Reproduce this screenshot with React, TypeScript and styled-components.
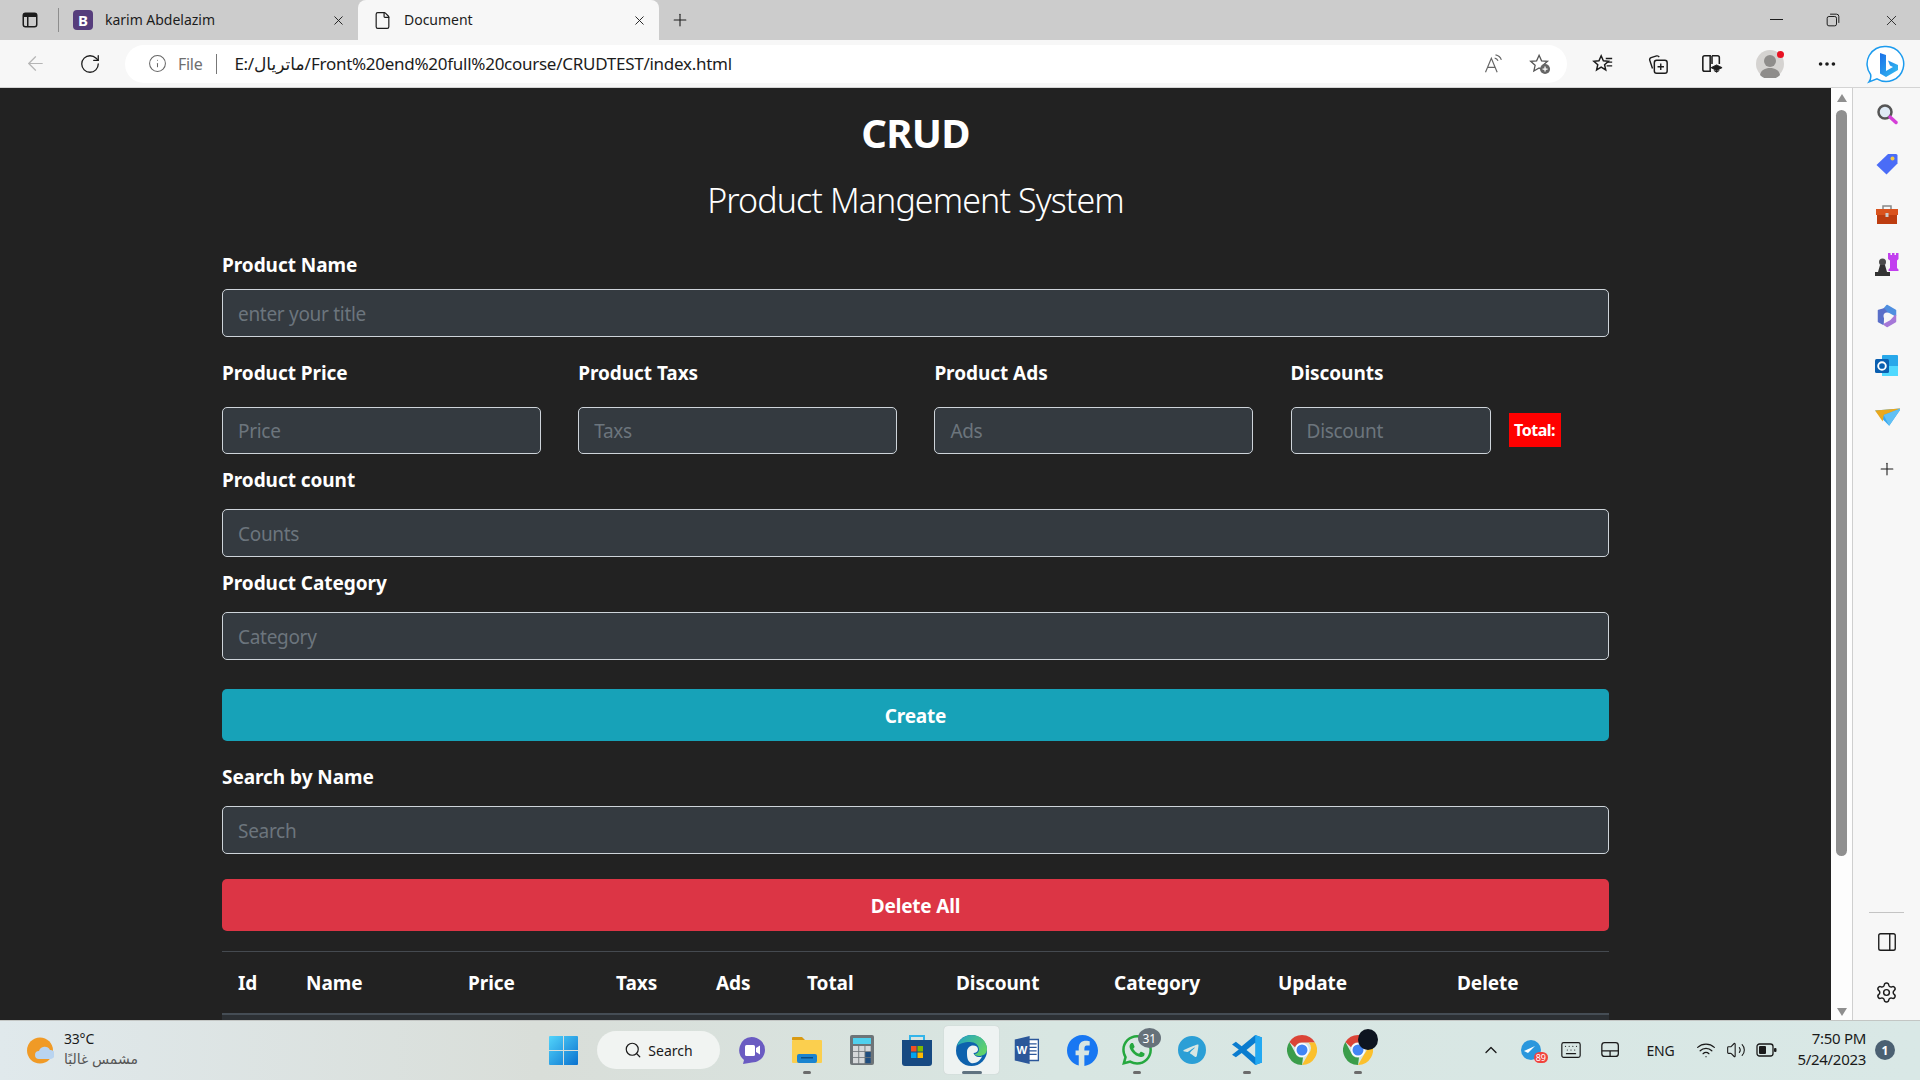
import React from 'react';
import styled, { createGlobalStyle } from 'styled-components';
import {
  ArrowLeft, ChevronUp, File, Info, Keyboard, MoreHorizontal, PanelRight, Plus, RotateCw,
  Search, Settings, Volume2, Wifi, X,
} from 'lucide-react';
import { SiFacebook, SiWhatsapp, SiTelegram } from 'react-icons/si';

const UI = `"Noto Sans", "Open Sans", "DejaVu Sans", sans-serif`;

const Global = createGlobalStyle`
  html, body { margin: 0; padding: 0; height: 100%; overflow: hidden; background: #222; }
  * { box-sizing: border-box; }
`;

const Window = styled.div`
  width: 1920px;
  height: 1080px;
  display: flex;
  flex-direction: column;
  font-family: ${UI};
  overflow: hidden;
`;

/* browser chrome */
const TabStrip = styled.div`
  height: 40px;
  background: #ccc;
  display: flex;
  align-items: center;
  color: #1c1c1c;
`;
const SideToggle = styled.div`
  width: 59px;
  height: 24px;
  padding-left: 21px;
  display: flex;
  align-items: center;
  border-right: 1px solid #8d8d8d;
`;
const Tab = styled.div<{ $active?: boolean; $width: number; $pad: number }>`
  width: ${p => p.$width}px;
  height: 40px;
  padding: 0 12px 0 ${p => p.$pad}px;
  display: flex;
  align-items: center;
  gap: 12px;
  font-size: 14px;
  letter-spacing: -0.02px;
  background: ${p => (p.$active ? '#f7f7f7' : 'transparent')};
  border-radius: 8px 8px 0 0;
`;
const TabTitle = styled.span`
  flex: 1;
  white-space: nowrap;
  margin-top: -2px;
`;
const Favicon = styled.span`
  width: 20px;
  height: 20px;
  border-radius: 4px;
  background: #563d7c;
  color: #fff;
  font-size: 15px;
  font-weight: 700;
  display: flex;
  align-items: center;
  justify-content: center;
`;
const NewTab = styled.div`
  margin-left: 11px;
  display: flex;
`;
const WindowControls = styled.div`
  margin-left: auto;
  display: flex;
  align-items: center;
  gap: 43px;
  padding-right: 20px;
`;
const Toolbar = styled.div`
  height: 48px;
  background: #f7f7f7;
  border-bottom: 1px solid #d4d4d4;
  display: flex;
  align-items: center;
  padding-left: 10px;
`;
const ToolSlot = styled.div<{ $w: number; $color?: string }>`
  width: ${p => p.$w}px;
  height: 32px;
  flex: none;
  display: flex;
  align-items: center;
  justify-content: center;
  color: ${p => p.$color ?? '#1c1c1c'};
`;
const AddressPill = styled.div`
  width: 1442px;
  height: 38px;
  flex: none;
  margin: 0 8px 0 5px;
  border-radius: 19px;
  background: #fff;
  display: flex;
  align-items: center;
  padding-left: 23px;
  color: #1c1c1c;
  font-size: 17px;
`;
const FileLabel = styled.span`
  color: #6f6f6f;
  margin-left: 11px;
  font-size: 16px;
  letter-spacing: -0.3px;
`;
const AddressDivider = styled.span`
  width: 1px;
  height: 20px;
  background: #777;
  margin: 0 17px 0 14px;
`;
const Url = styled.span`
  white-space: nowrap;
  letter-spacing: -0.27px;
`;
const PillActions = styled.div`
  margin-left: auto;
  display: flex;
  align-items: center;
  gap: 26px;
  padding-right: 16px;
  color: #666;
`;
const ProfileDot = styled.span`
  position: absolute;
  top: 1px;
  right: 0;
  width: 7px;
  height: 7px;
  border-radius: 50%;
  background: #e81123;
`;
const Profile = styled.div`
  position: relative;
  width: 28px;
  height: 28px;
`;

/* middle */
const Middle = styled.div`
  flex: 1;
  min-height: 0;
  display: flex;
`;
const Page = styled.main`
  width: 1831px;
  flex: none;
  background: #222;
  overflow: hidden;
`;
const Container = styled.div`
  width: 1387px;
  margin: 0 auto;
  color: #fff;
  font-family: ${UI};
`;
const Title = styled.h1`
  margin: 21px 0 0;
  font-size: 40px;
  line-height: 48px;
  font-weight: 700;
  text-align: center;
  letter-spacing: -0.7px;
`;
const Subtitle = styled.h2`
  margin: 19px 0 0;
  font-size: 34px;
  line-height: 48px;
  font-weight: 300;
  text-align: center;
  letter-spacing: -0.9px;
`;
const FieldLabel = styled.label<{ $top: number; $bottom: number }>`
  display: block;
  margin: ${p => p.$top}px 0 ${p => p.$bottom}px;
  font-size: 19px;
  line-height: 24px;
  font-weight: 700;
  letter-spacing: -0.05px;
`;
const TextInput = styled.input<{ $short?: boolean }>`
  display: block;
  width: 100%;
  height: ${p => (p.$short ? 47 : 48)}px;
  padding: 1px 15px 0;
  background: #343a40;
  border: 1px solid #ced4da;
  border-radius: 5px;
  color: #fff;
  font-family: ${UI};
  font-size: 19px;
  letter-spacing: -0.3px;
  outline: none;
  &::placeholder { color: #6c757d; opacity: 1; }
`;
const PriceRow = styled.div`
  display: grid;
  grid-template-columns: 319px 319px 319px 1fr;
  column-gap: 37.2px;
`;
const DiscountCell = styled.div`
  display: flex;
  align-items: center;
  gap: 18px;
`;
const DiscountInput = styled(TextInput)`
  width: 200px;
  flex: none;
`;
const TotalBadge = styled.small`
  height: 34px;
  width: 52px;
  margin-top: -1px;
  background: #f00;
  color: #fff;
  font-size: 16px;
  font-weight: 700;
  letter-spacing: -0.5px;
  display: flex;
  align-items: center;
  justify-content: center;
`;
const ActionButton = styled.button<{ $tone: string; $top: number }>`
  display: block;
  width: 100%;
  height: 52px;
  margin-top: ${p => p.$top}px;
  padding-top: 2px;
  border: none;
  border-radius: 5px;
  background: ${p => p.$tone};
  color: #fff;
  font-family: ${UI};
  font-size: 19px;
  font-weight: 700;
  letter-spacing: -0.2px;
`;
const Table = styled.table`
  width: 1387px;
  margin-top: 20px;
  border-collapse: collapse;
  table-layout: fixed;
  border-top: 1px solid #454a50;
`;
const HeadCell = styled.th<{ $w: number }>`
  width: ${p => p.$w}px;
  height: 62px;
  padding: 1px 0 0 16px;
  text-align: left;
  font-size: 19px;
  font-weight: 700;
  letter-spacing: -0.05px;
  border-bottom: 2px solid #454d55;
`;
const StripeRow = styled.td`
  height: 50px;
  background: #2c3034;
`;

/* scrollbar and sidebar */
const ScrollTrack = styled.div`
  width: 22px;
  flex: none;
  background: #fdfdfd;
  border-right: 1px solid #cfcfcf;
  display: flex;
  flex-direction: column;
  align-items: center;
  padding: 6px 0 4px;
`;
const ScrollThumb = styled.div`
  width: 11px;
  height: 746px;
  margin: 8px 0 auto;
  border-radius: 6px;
  background: #8f8f8f;
`;
const Arrow = styled.div<{ $down?: boolean }>`
  width: 0;
  height: 0;
  border-left: 5.5px solid transparent;
  border-right: 5.5px solid transparent;
  ${p => (p.$down ? 'border-top: 8px solid #8f8f8f;' : 'border-bottom: 8px solid #8f8f8f;')}
`;
const Sidebar = styled.aside`
  flex: 1;
  background: #f7f7f7;
  display: flex;
  flex-direction: column;
  align-items: center;
  padding: 13px 0 15px;
  color: #1c1c1c;
`;
const SideIcon = styled.div<{ $top?: number }>`
  width: 26px;
  height: 26px;
  margin-top: ${p => p.$top ?? 0}px;
  margin-bottom: 24.4px;
  display: flex;
  align-items: center;
  justify-content: center;
`;
const SideRule = styled.div`
  width: 35px;
  height: 1px;
  background: #c4c4c4;
  margin: auto 0 16px;
`;
const SideBottom = styled.div`
  height: 26px;
  margin-bottom: 24px;
  display: flex;
  align-items: center;
  &:last-child { margin-bottom: 0; }
`;

/* taskbar */
const Taskbar = styled.footer`
  height: 60px;
  flex: none;
  padding-bottom: 1px;
  border-top: 1px solid #c3c6c4;
  background: linear-gradient(90deg, #e0e9ec 0%, #d9ded9 28%, #d8e6e2 55%, #d9e8e6 100%);
  display: flex;
  align-items: center;
  color: #1a1a1a;
`;
const Weather = styled.div`
  width: 549px;
  flex: none;
  padding-left: 27px;
  display: flex;
  align-items: center;
  gap: 10px;
`;
const WeatherText = styled.div`
  font-size: 14px;
  line-height: 20px;
  margin-top: -2px;
  letter-spacing: -0.2px;
  white-space: nowrap;
`;
const WeatherNote = styled.div`
  color: #555;
`;
const TaskIcons = styled.div`
  display: flex;
  align-items: center;
  height: 48px;
`;
const TaskSlot = styled.div<{ $active?: boolean; $w?: number; $dot?: boolean }>`
  position: relative;
  width: ${p => p.$w ?? 55.1}px;
  height: 48px;
  flex: none;
  display: flex;
  align-items: center;
  justify-content: center;
  border-radius: 4px;
  ${p => p.$active && 'background: #eef3f2; box-shadow: 0 0 1px #bbb;'}
  &::after {
    content: '';
    display: ${p => (p.$dot || p.$active ? 'block' : 'none')};
    position: absolute;
    bottom: 0;
    left: 50%;
    transform: translateX(-50%);
    width: ${p => (p.$active ? 20 : 8)}px;
    height: 3px;
    border-radius: 2px;
    background: ${p => (p.$active ? '#5f7280' : '#6b6b6b')};
  }
`;
const SearchPill = styled.div`
  width: 123px;
  height: 38px;
  margin: 0 4px 0 19px;
  border-radius: 19px;
  background: #f1f4f2;
  display: flex;
  align-items: center;
  justify-content: center;
  gap: 6px;
  font-size: 14px;
  flex: none;
`;
const CountBadge = styled.span`
  position: absolute;
  top: 2px;
  right: 4px;
  width: 23px;
  height: 20px;
  border-radius: 50%;
  background: #66717a;
  color: #fff;
  font-size: 12px;
  display: flex;
  align-items: center;
  justify-content: center;
`;
const BlackBlob = styled.span`
  position: absolute;
  top: 3px;
  right: 7px;
  width: 20px;
  height: 21px;
  border-radius: 50%;
  background: #0d1420;
`;
const Tray = styled.div`
  margin-left: auto;
  display: flex;
  align-items: center;
  padding-right: 25px;
`;
const TraySlot = styled.div<{ $w: number }>`
  position: relative;
  width: ${p => p.$w}px;
  display: flex;
  align-items: center;
  justify-content: center;
  flex: none;
`;
const TrayBadge = styled.span`
  position: absolute;
  right: 3px;
  bottom: -3px;
  padding: 0 2px;
  border-radius: 6px;
  background: #f0443e;
  color: #fff;
  font-size: 9px;
  line-height: 11px;
`;
const Lang = styled(TraySlot)`
  font-size: 14px;
  letter-spacing: -0.2px;
`;
const Clock = styled.div`
  width: 85px;
  text-align: right;
  font-size: 15px;
  line-height: 21px;
  margin-top: -2px;
  letter-spacing: -0.3px;
`;
const NotifyBadge = styled.span`
  width: 20px;
  height: 20px;
  margin-left: 9px;
  border-radius: 50%;
  background: #4b6072;
  color: #fff;
  font-size: 12px;
  font-weight: 700;
  display: flex;
  align-items: center;
  justify-content: center;
`;

/* drawn icons */
const Glyph = ({ size = 24, children }: { size?: number; children: React.ReactNode }) => (
  <svg width={size} height={size} viewBox="0 0 24 24" fill="none">{children}</svg>
);

const TabsIcon = () => (
  <Glyph size={18}>
    <rect x="3" y="3" width="18" height="18" rx="3" stroke="#1c1c1c" strokeWidth="2" />
    <path d="M3 8h18v-2a3 3 0 0 0-3-3H6a3 3 0 0 0-3 3z" fill="#1c1c1c" />
    <path d="M9 8v13" stroke="#1c1c1c" strokeWidth="2" />
  </Glyph>
);
const RestoreIcon = () => (
  <Glyph size={14}>
    <rect x="2" y="6" width="16" height="16" rx="3" stroke="#1c1c1c" strokeWidth="1.7" />
    <path d="M7 2h11a4 4 0 0 1 4 4v11" stroke="#1c1c1c" strokeWidth="1.7" />
  </Glyph>
);
const ReadAloudIcon = () => (
  <Glyph size={20}>
    <path d="M3 22 10 5l7 17M5.500 16h9" stroke="#666" strokeWidth="1.400" />
    <path d="M14 5a5 5 0 0 1 4 3M15 1a9 9 0 0 1 7 6" stroke="#666" strokeWidth="1.400" />
  </Glyph>
);
const FavAddIcon = () => (
  <Glyph size={22}>
    <path d="M11 2.500l2.700 6 6.500.6-4.900 4.300 1.400 6.300-5.700-3.300-5.700 3.300 1.400-6.300L1.800 9.100l6.500-.6z" stroke="#555" strokeWidth="1.400" />
    <circle cx="17.500" cy="17.500" r="5.500" fill="#666" />
    <path d="M17.500 14.800v5.400M14.800 17.500h5.400" stroke="#fff" strokeWidth="1.400" />
  </Glyph>
);
const FavoritesIcon = () => (
  <Glyph size={22}>
    <path d="M10 3l2.400 5.400 5.600.6-4.300 3.800 1.300 5.700-5-3-5 3 1.300-5.700L2 9l5.600-.6z" stroke="#1c1c1c" strokeWidth="1.600" />
    <path d="M15 6h7M17 10h5M16 14h6" stroke="#1c1c1c" strokeWidth="1.500" />
  </Glyph>
);
const CollectionsIcon = () => (
  <Glyph size={22}>
    <path d="M6 17 3 8c-.4-1.300.3-2.500 1.500-3l6-1.800c1.200-.3 2.300.3 2.800 1.300" stroke="#1c1c1c" strokeWidth="1.500" />
    <rect x="8" y="8" width="14" height="14" rx="2.500" stroke="#1c1c1c" strokeWidth="1.600" fill="#f7f7f7" />
    <path d="M15 11.500v7M11.500 15h7" stroke="#1c1c1c" strokeWidth="1.500" />
  </Glyph>
);
const LearnIcon = () => (
  <Glyph size={22}>
    <path d="M10 20H4a2 2 0 0 1-2-2V5a2 2 0 0 1 2-2h6zM12 3h6a2 2 0 0 1 2 2v7M12 3v9" stroke="#1c1c1c" strokeWidth="1.700" />
    <path d="M11 16l6-3 6 3-6 3zM14 19l3 2 3-2" fill="#1c1c1c" stroke="#1c1c1c" strokeWidth="1" />
  </Glyph>
);
const ProfileIcon = () => (
  <svg width="28" height="28" viewBox="0 0 28 28">
    <circle cx="14" cy="14" r="14" fill="#d5d3d1" />
    <circle cx="14" cy="11" r="6" fill="#8f8d8b" />
    <path d="M4 25c1-5 5-7 10-7s9 2 10 7a14 14 0 0 1-20 0z" fill="#8f8d8b" />
  </svg>
);
const BingIcon = () => (
  <svg width="40" height="40" viewBox="0 0 40 40" fill="none">
    <defs>
      <linearGradient id="bingB" x1="0" y1="0" x2="1" y2="1">
        <stop offset="0" stopColor="#1b6fe8" />
        <stop offset="1" stopColor="#35c1f1" />
      </linearGradient>
    </defs>
    <path d="M20 2.500a17.500 17.500 0 1 1-9 32.400L3 38c1.400-2 2.200-4.500 1.600-7.500A17.500 17.500 0 0 1 20 2.500z" fill="#fff" stroke="#1c9bee" strokeWidth="1.500" />
    <path d="M14 9l6 2v16l7-4-3-1.500-2-5 10 4.500v5l-12 7-6-3.500z" fill="url(#bingB)" />
  </svg>
);
const MagnifierIcon = () => (
  <Glyph>
    <circle cx="10" cy="10" r="6.500" fill="#dfeaf5" stroke="#555" strokeWidth="2.500" />
    <path d="M15 15l6 5.500" stroke="#d53fd8" strokeWidth="3.500" strokeLinecap="round" />
  </Glyph>
);
const TagIcon = () => (
  <Glyph>
    <path d="M13 2h8a1.500 1.500 0 0 1 1.500 1.500v8L11.500 22.500 1.500 13z" fill="#4a6cf7" />
    <circle cx="17.500" cy="6.500" r="2" fill="#f3c843" />
  </Glyph>
);
const ToolboxIcon = () => (
  <Glyph>
    <path d="M8 6V3h8v3" stroke="#888" strokeWidth="1.500" />
    <rect x="1" y="6" width="22" height="6" fill="#d9531e" />
    <rect x="2" y="12" width="20" height="9" fill="#bd3d10" />
    <rect x="10.500" y="10" width="3" height="4" fill="#ccc" />
  </Glyph>
);
const ChessIcon = () => (
  <Glyph>
    <path d="M13 0h2.500v2H17V0h2.500v2H21V0h2.500v6l-1.500 1.500v7.500l1.500 1.500V18h-10v-1.500l1.500-1.500V7.500L13 6z" fill="#c23fef" />
    <circle cx="7.500" cy="9" r="3.500" fill="#4c4c4c" />
    <path d="M5 12h5l2 7H3zM0 19h15v4H0z" fill="#333" />
  </Glyph>
);
const M365Icon = () => (
  <Glyph>
    <g strokeLinejoin="round" strokeWidth="1.500">
      <path d="M12 1.500 20.500 6.500v5L15 8.500 12 8.500 9 5z" fill="#4f8fe0" stroke="#4f8fe0" />
      <path d="M20.500 11.500v6L12 22.500 9 20.500l6.500-3.500z" fill="#a678d8" stroke="#a678d8" />
      <path d="M3.500 6.500 9 5l3 3.500-3.500 2-.5 9.500-4.500-2.500z" fill="#5a6fc8" stroke="#5a6fc8" />
    </g>
    <circle cx="12" cy="12" r="3.500" fill="#f7f7f7" />
  </Glyph>
);
const OutlookIcon = () => (
  <Glyph>
    <rect x="7" y="1" width="16" height="21" rx="1" fill="#28a8ea" />
    <path d="M7 12h16v10H7z" fill="#50d9ff" />
    <rect x="0" y="5" width="14" height="14" rx="1.500" fill="#0a5fb0" />
    <circle cx="7" cy="12" r="3.800" stroke="#fff" strokeWidth="1.900" />
  </Glyph>
);
const PlaneIcon = () => (
  <Glyph size={26}>
    <path d="M1 7l24-2-11 16-5-5z" fill="#38a7ee" />
    <path d="M1 7l24-2L9 11l-1 6z" fill="#e9a81c" />
    <path d="M25 5 9 11l5 10z" fill="#60c0f4" />
  </Glyph>
);
const StartIcon = () => (
  <svg width="29" height="29" viewBox="0 0 29 29">
    <defs>
      <linearGradient id="winG" x1="0" y1="0" x2="1" y2="1">
        <stop offset="0" stopColor="#52d4fb" />
        <stop offset="1" stopColor="#0a72cf" />
      </linearGradient>
    </defs>
    <path d="M0 1a1 1 0 0 1 1-1h13v14H0zM15 0h13a1 1 0 0 1 1 1v13H15zM0 15h14v14H1a1 1 0 0 1-1-1zM15 15h14v13a1 1 0 0 1-1 1H15z" fill="url(#winG)" />
  </svg>
);
const SunCloudIcon = () => (
  <svg width="27" height="27" viewBox="0 0 27 27">
    <circle cx="13" cy="13.500" r="13" fill="#f09a26" />
    <path d="M12 22a4 4 0 0 1 0-8 6 6 0 0 1 11-1 4.500 4.500 0 0 1 1 9z" fill="#b9d4f0" />
  </svg>
);
const TeamsIcon = () => (
  <svg width="29" height="29" viewBox="0 0 29 29">
    <path d="M14.500 1A13.500 13 0 0 1 28 14c0 7-6 12.500-13 12.500L6 28l1-4A13 13 0 0 1 14.500 1z" fill="#6a5bc2" />
    <rect x="8" y="9" width="10" height="11" rx="1.500" fill="#fff" />
    <path d="M19 12l4-2.500v9L19 16z" fill="#fff" />
  </svg>
);
const FolderIcon = () => (
  <svg width="30" height="30" viewBox="0 0 30 30">
    <path d="M0 3a1 1 0 0 1 1-1h9l3 3h-13z" fill="#d99a12" />
    <rect x="0" y="5" width="30" height="23" rx="1" fill="#fbcf4e" />
    <rect x="5" y="19" width="20" height="9" rx="2" fill="#1a84d0" />
    <rect x="9" y="22" width="12" height="1.500" fill="#0b4e86" />
  </svg>
);
const CalcIcon = () => (
  <svg width="24" height="30" viewBox="0 0 24 30">
    <rect width="24" height="30" rx="2" fill="#6d7478" />
    <rect x="3" y="3" width="18" height="6" fill="#4fd0ee" />
    {[0, 1, 2].map(r => [0, 1, 2].map(c => (
      <rect key={`${r}${c}`} x={3 + c * 6.2} y={11 + r * 6} width="5.300" height="5.200" fill={c === 2 && r > 0 ? '#1f4e80' : '#d5d8da'} />
    )))}
  </svg>
);
const StoreIcon = () => (
  <svg width="30" height="32" viewBox="0 0 30 32">
    <path d="M8 7V2h14v5" fill="none" stroke="#33b5ea" strokeWidth="2" />
    <path d="M0 6h30v23a3 3 0 0 1-3 3H3a3 3 0 0 1-3-3z" fill="#174a82" />
    <rect x="9" y="12" width="5.500" height="5.500" fill="#f25022" />
    <rect x="15.500" y="12" width="5.500" height="5.500" fill="#7fba00" />
    <rect x="9" y="18.500" width="5.500" height="5.500" fill="#00a4ef" />
    <rect x="15.500" y="18.500" width="5.500" height="5.500" fill="#ffb900" />
  </svg>
);
const EdgeIcon = () => (
  <svg width="31" height="31" viewBox="0 0 31 31">
    <defs>
      <linearGradient id="edgeG" x1="0" y1="0" x2="1" y2="0.600">
        <stop offset="0" stopColor="#1fa0c8" />
        <stop offset="1" stopColor="#5fd26a" />
      </linearGradient>
    </defs>
    <circle cx="15.500" cy="15.500" r="15.500" fill="#0d62ad" />
    <path d="M1 11C3 4 9 0 15.500 0 24 0 31 6 31 14c0 5-4 7-8 7-2 0-4-.7-5-2 3 0 5-2 5-4.500C23 10 19 7 14 7 8 7 3 9 1 11z" fill="url(#edgeG)" />
    <path d="M11 17c0-4 3-6.500 6-6.500 3 0 5 1.500 5 4 0 2-2 3.500-4.500 3.500.5 3 4 5 8.500 3.500-2 5-7 7.500-11 6.500C11 26 11 21 11 17z" fill="#eef3f2" />
  </svg>
);
const WordIcon = () => (
  <svg width="28" height="28" viewBox="0 0 28 32">
    <path d="M14 4h13v24H14z" fill="#fff" stroke="#2b579a" strokeWidth="1.500" />
    <path d="M16 9h9M16 13h9M16 17h9M16 21h9" stroke="#2b579a" strokeWidth="1.500" />
    <path d="M0 4 17 0v32L0 28z" fill="#2b579a" />
    <text x="2" y="21" fontFamily="Liberation Sans" fontSize="13" fontWeight="700" fill="#fff">W</text>
  </svg>
);
const VsCodeIcon = () => (
  <svg width="30" height="30" viewBox="0 0 31 35" preserveAspectRatio="none">
    <path d="M31 3v29l-7 3L10 21l-6 5-4-3 7-6-7-6 4-3 6 5L24 0z" fill="#0a7ccf" />
    <path d="M24 0l7 3v29l-7 3z" fill="#23a9f2" />
    <path d="M24 9l-9 8.500L24 26z" fill="#d9e8e6" />
  </svg>
);
const ChromeIcon = () => (
  <svg width="30" height="30" viewBox="0 0 30 30">
    <path d="M15 0a15 15 0 0 1 13 7.500H15a7.500 7.500 0 0 0-7 4.700L2.400 7A15 15 0 0 1 15 0z" fill="#db4437" />
    <path d="M28 7.500A15 15 0 0 1 15 30l6.500-11.300a7.500 7.500 0 0 0 0-11.200z" fill="#fbc02d" />
    <path d="M15 30A15 15 0 0 1 2.400 7L8 17.500a7.500 7.500 0 0 0 8 4.900z" fill="#3a9d4a" />
    <circle cx="15" cy="15" r="7" fill="#fff" />
    <circle cx="15" cy="15" r="5.500" fill="#4285f4" />
  </svg>
);
const TouchpadIcon = () => (
  <Glyph size={22}>
    <rect x="2" y="4" width="18" height="15" rx="3" stroke="#1a1a1a" strokeWidth="1.400" />
    <path d="M2 13h18M11 13v6" stroke="#1a1a1a" strokeWidth="1.400" />
  </Glyph>
);
const BatteryIcon = () => (
  <svg width="21" height="14" viewBox="0 0 21 14" fill="none">
    <rect x="1" y="1" width="16" height="12" rx="2.500" stroke="#1a1a1a" strokeWidth="1.300" />
    <rect x="3" y="3" width="7" height="8" rx="1" fill="#1a1a1a" />
    <rect x="18" y="5" width="2.500" height="4" rx="1" fill="#1a1a1a" />
  </svg>
);

const COLUMNS: [string, number][] = [
  ['Id', 68], ['Name', 162], ['Price', 148], ['Taxs', 100], ['Ads', 91],
  ['Total', 149], ['Discount', 158], ['Category', 164], ['Update', 179], ['Delete', 168],
];

const App = () => (
  <Window>
    <Global />
    <TabStrip>
      <SideToggle><TabsIcon /></SideToggle>
      <Tab $width={299} $pad={14}>
        <Favicon>B</Favicon>
        <TabTitle>karim Abdelazim</TabTitle>
        <X size={15} strokeWidth={1.5} />
      </Tab>
      <Tab $active $width={301} $pad={15}>
        <File size={19} strokeWidth={1.5} />
        <TabTitle>Document</TabTitle>
        <X size={15} strokeWidth={1.5} />
      </Tab>
      <NewTab><Plus size={20} strokeWidth={1.3} /></NewTab>
      <WindowControls>
        <svg width="13" height="2"><rect width="13" height="1" fill="#1c1c1c" /></svg>
        <RestoreIcon />
        <X size={17} strokeWidth={1.2} />
      </WindowControls>
    </TabStrip>

    <Toolbar>
      <ToolSlot $w={50} $color="#b5b5b5"><ArrowLeft size={23} strokeWidth={1.3} /></ToolSlot>
      <ToolSlot $w={60}><RotateCw size={22} strokeWidth={1.4} /></ToolSlot>
      <AddressPill>
        <Info size={19} strokeWidth={1.3} color="#666" />
        <FileLabel>File</FileLabel>
        <AddressDivider />
        <Url>E:/ماتريال/Front%20end%20full%20course/CRUDTEST/index.html</Url>
        <PillActions>
          <ReadAloudIcon />
          <FavAddIcon />
        </PillActions>
      </AddressPill>
      <ToolSlot $w={56}><FavoritesIcon /></ToolSlot>
      <ToolSlot $w={54}><CollectionsIcon /></ToolSlot>
      <ToolSlot $w={54}><LearnIcon /></ToolSlot>
      <ToolSlot $w={62}><Profile><ProfileIcon /><ProfileDot /></Profile></ToolSlot>
      <ToolSlot $w={52}><MoreHorizontal size={22} strokeWidth={2} /></ToolSlot>
      <ToolSlot $w={66}><BingIcon /></ToolSlot>
    </Toolbar>

    <Middle>
      <Page>
        <Container>
          <Title>CRUD</Title>
          <Subtitle>Product Mangement System</Subtitle>

          <FieldLabel $top={29} $bottom={12}>Product Name</FieldLabel>
          <TextInput placeholder="enter your title" />

          <PriceRow>
            <div>
              <FieldLabel $top={24} $bottom={22}>Product Price</FieldLabel>
              <TextInput $short placeholder="Price" />
            </div>
            <div>
              <FieldLabel $top={24} $bottom={22}>Product Taxs</FieldLabel>
              <TextInput $short placeholder="Taxs" />
            </div>
            <div>
              <FieldLabel $top={24} $bottom={22}>Product Ads</FieldLabel>
              <TextInput $short placeholder="Ads" />
            </div>
            <div>
              <FieldLabel $top={24} $bottom={22}>Discounts</FieldLabel>
              <DiscountCell>
                <DiscountInput $short placeholder="Discount" />
                <TotalBadge>Total:</TotalBadge>
              </DiscountCell>
            </div>
          </PriceRow>

          <FieldLabel $top={14} $bottom={17}>Product count</FieldLabel>
          <TextInput placeholder="Counts" />
          <FieldLabel $top={14} $bottom={17}>Product Category</FieldLabel>
          <TextInput placeholder="Category" />

          <ActionButton $tone="#17a2b8" $top={29}>Create</ActionButton>

          <FieldLabel $top={24} $bottom={17}>Search by Name</FieldLabel>
          <TextInput placeholder="Search" />

          <ActionButton $tone="#dc3545" $top={25}>Delete All</ActionButton>

          <Table>
            <thead>
              <tr>{COLUMNS.map(([name, w]) => <HeadCell key={name} $w={w}>{name}</HeadCell>)}</tr>
            </thead>
            <tbody>
              <tr><StripeRow colSpan={10} /></tr>
            </tbody>
          </Table>
        </Container>
      </Page>

      <ScrollTrack>
        <Arrow />
        <ScrollThumb />
        <Arrow $down />
      </ScrollTrack>

      <Sidebar>
        <SideIcon><MagnifierIcon /></SideIcon>
        <SideIcon><TagIcon /></SideIcon>
        <SideIcon><ToolboxIcon /></SideIcon>
        <SideIcon><ChessIcon /></SideIcon>
        <SideIcon><M365Icon /></SideIcon>
        <SideIcon><OutlookIcon /></SideIcon>
        <SideIcon><PlaneIcon /></SideIcon>
        <SideIcon $top={2}><Plus size={20} strokeWidth={1.3} /></SideIcon>
        <SideRule />
        <SideBottom><PanelRight size={22} strokeWidth={1.5} /></SideBottom>
        <SideBottom><Settings size={23} strokeWidth={1.5} /></SideBottom>
      </Sidebar>
    </Middle>

    <Taskbar>
      <Weather>
        <SunCloudIcon />
        <WeatherText>
          33°C
          <WeatherNote>مشمس غالبًا</WeatherNote>
        </WeatherText>
      </Weather>
      <TaskIcons>
        <TaskSlot $w={29}><StartIcon /></TaskSlot>
        <SearchPill><Search size={18} strokeWidth={1.6} />Search</SearchPill>
        <TaskSlot><TeamsIcon /></TaskSlot>
        <TaskSlot $dot><FolderIcon /></TaskSlot>
        <TaskSlot><CalcIcon /></TaskSlot>
        <TaskSlot><StoreIcon /></TaskSlot>
        <TaskSlot $active><EdgeIcon /></TaskSlot>
        <TaskSlot><WordIcon /></TaskSlot>
        <TaskSlot><SiFacebook size={31} color="#1877f2" /></TaskSlot>
        <TaskSlot $dot><SiWhatsapp size={30} color="#25a83f" /><CountBadge>31</CountBadge></TaskSlot>
        <TaskSlot><SiTelegram size={28} color="#2b9fd6" /></TaskSlot>
        <TaskSlot $dot><VsCodeIcon /></TaskSlot>
        <TaskSlot><ChromeIcon /></TaskSlot>
        <TaskSlot $dot><ChromeIcon /><BlackBlob /></TaskSlot>
      </TaskIcons>
      <Tray>
        <TraySlot $w={40}><ChevronUp size={20} strokeWidth={1.6} /></TraySlot>
        <TraySlot $w={40}>
          <svg width="20" height="20" viewBox="0 0 20 20">
            <circle cx="10" cy="10" r="10" fill="#2a97dd" />
            <path d="M3 11l11-5-7 7z" fill="#fff" />
          </svg>
          <TrayBadge>89</TrayBadge>
        </TraySlot>
        <TraySlot $w={40}><Keyboard size={22} strokeWidth={1.3} /></TraySlot>
        <TraySlot $w={39}><TouchpadIcon /></TraySlot>
        <Lang $w={61}>ENG</Lang>
        <TraySlot $w={30}><Wifi size={20} strokeWidth={1.5} /></TraySlot>
        <TraySlot $w={30}><Volume2 size={20} strokeWidth={1.3} /></TraySlot>
        <TraySlot $w={30}><BatteryIcon /></TraySlot>
        <Clock>7:50 PM<br />5/24/2023</Clock>
        <NotifyBadge>1</NotifyBadge>
      </Tray>
    </Taskbar>
  </Window>
);

export default App;
